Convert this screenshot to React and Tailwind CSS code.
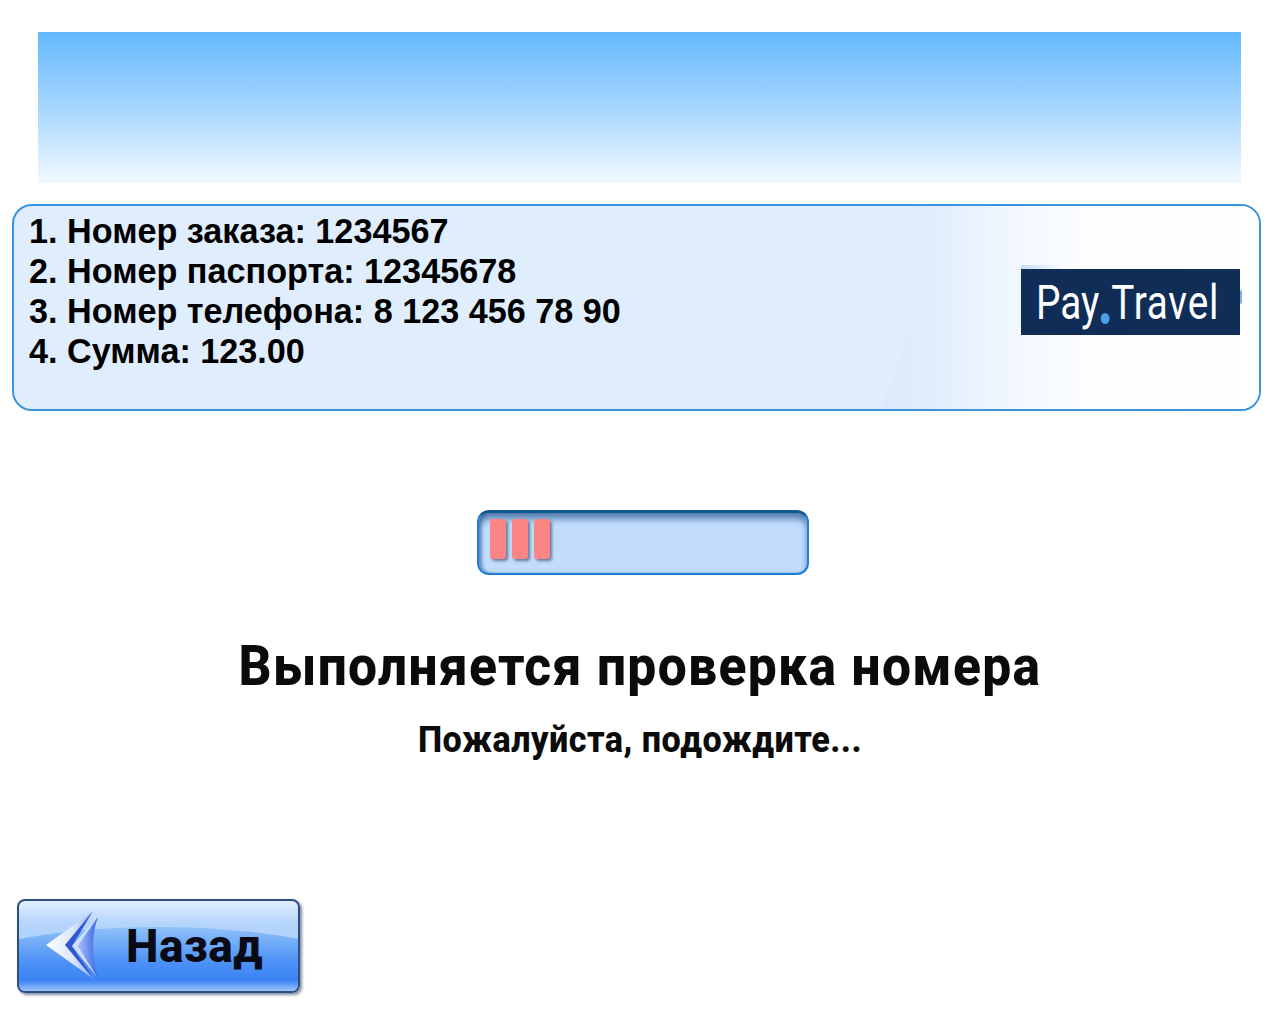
import React from "react";

const infoRows = [
  "1. Номер заказа: 1234567",
  "2. Номер паспорта: 12345678",
  "3. Номер телефона: 8 123 456 78 90",
  "4. Сумма: 123.00",
];

// Decorative swoosh in the right part of the info panel
function PanelSwoosh() {
  return (
    <svg className="absolute inset-0 h-full w-full" viewBox="0 0 1245 203" preserveAspectRatio="none">
      <defs>
        <linearGradient id="swoosh" x1="0" y1="0" x2="1" y2="0">
          <stop offset="0" stopColor="#dae9fc" />
          <stop offset="0.1" stopColor="#dfecfd" />
          <stop offset="0.2" stopColor="#e6f1fd" />
          <stop offset="0.3" stopColor="#eef5fe" />
          <stop offset="0.4" stopColor="#f5f9ff" />
          <stop offset="0.55" stopColor="#fcfdff" />
          <stop offset="1" stopColor="#ffffff" />
        </linearGradient>
      </defs>
      <path d="M903 0 C 905 70, 895 140, 867 203 L1245 203 L1245 0 Z" fill="url(#swoosh)" />
    </svg>
  );
}

function PayTravelLogo() {
  return (
    <div className="relative flex h-[66px] w-[219px] items-center bg-[#0f2d56] pl-[15px]">
      <div className="absolute -top-1 left-0 h-1 w-[40px] bg-gradient-to-r from-[#c4def8] to-[#f4f9ff]" />
      <div className="flex origin-left scale-x-[0.79] items-baseline font-['Roboto',sans-serif] text-[49px] leading-none whitespace-nowrap text-white">
        <span>Pay</span>
        <span className="mx-[2px] h-[11px] w-[11px] translate-y-[5px] rounded-full bg-[#4a9fe6]" />
        <span className="tracking-[1px]">Travel</span>
      </div>
      <div className="absolute right-[-2px] top-[21px] h-[14px] w-[2px] rounded-r-full bg-[#7fb0e0]" />
    </div>
  );
}

function BackArrow() {
  return (
    <svg width="54" height="72" viewBox="0 0 54 72" className="shrink-0">
      <defs>
        <linearGradient id="arrowLight" x1="0" y1="0" x2="1" y2="0">
          <stop offset="0" stopColor="#ffffff" />
          <stop offset="0.55" stopColor="#dbe6fa" />
          <stop offset="1" stopColor="#8aa8ee" />
        </linearGradient>
        <linearGradient id="arrowBlue" x1="0" y1="0" x2="1" y2="0">
          <stop offset="0" stopColor="#a9c0f7" />
          <stop offset="1" stopColor="#3765e6" />
        </linearGradient>
      </defs>
      <path d="M1 35 L47 2 L22 34 L50 70 Z" fill="url(#arrowLight)" />
      <path d="M48 1 L20 35 L50 71 L27 36 Z" fill="#2f57d4" />
      <path d="M52 7 L27 36 L52 67 L33 36 Z" fill="#d2def8" />
      <path d="M53 7 L33 36 L53 68 C47 50 46 25 53 7 Z" fill="url(#arrowBlue)" />
    </svg>
  );
}

export default function App() {
  return (
    <div className="flex h-[1024px] w-[1280px] flex-col overflow-hidden bg-white pt-8">
      {/* Top banner */}
      <div className="ml-[38px] h-[151px] w-[1203px] shrink-0 bg-gradient-to-b from-[#62b8fe] via-[#a6d6fd] to-[#f2f9ff]" />

      {/* Order info */}
      <div className="relative ml-3 mt-[21px] h-[207px] w-[1249px] shrink-0 overflow-hidden rounded-[20px] border-2 border-[#3a94dc] bg-[#e0edfd]">
        <PanelSwoosh />
        <div className="relative flex items-start justify-between pl-[15px] pr-[19px] pt-[5px]">
          <div className="font-['Liberation_Sans',sans-serif] text-[34.2px] font-bold leading-[40px] text-black">
            {infoRows.map((row) => (
              <div key={row}>{row}</div>
            ))}
          </div>
          <div className="mt-[58px]">
            <PayTravelLogo />
          </div>
        </div>
      </div>

      {/* Progress */}
      <div className="ml-[477px] mt-[99px] flex h-[65px] w-[332px] shrink-0 items-start gap-[6px] rounded-[12px] border-2 border-[#1f7fd6] border-t-[3px] border-t-[#11588f] bg-[#c2dcfc] pl-[11px] pt-[6px] shadow-[inset_0_6px_6px_rgba(20,70,130,0.6),inset_3px_0_3px_rgba(20,70,130,0.35)]">
        {[0, 1, 2].map((i) => (
          <div
            key={i}
            className="h-[40px] w-[16px] rounded-[3px] bg-[#fb8585] shadow-[2px_2px_3px_rgba(40,60,90,0.6)]"
          />
        ))}
      </div>

      {/* Status */}
      <div className="mt-[56px] flex flex-col items-center font-['Roboto',sans-serif] font-extrabold text-[#0b0b0b]">
        <h1 className="w-[1284px] scale-x-[0.92] text-center text-[56px] leading-[70px] tracking-[1.45px] whitespace-nowrap">
          Выполняется проверка номера
        </h1>
        <p className="mt-[17px] w-[1280px] scale-x-[0.95] text-center text-[36px] leading-[44px] tracking-[0.5px] whitespace-nowrap">
          Пожалуйста, подождите...
        </p>
      </div>

      {/* Back button */}
      <button className="relative ml-[17px] mt-[137px] flex h-[94px] w-[283px] shrink-0 items-center overflow-hidden rounded-[8px] border-2 border-[#2c4f80] bg-gradient-to-b from-[#e2effe] via-[#b4d4fb] via-25% to-[#a4cbfb] pl-[26px] shadow-[2px_2px_3px_rgba(30,50,80,0.55)]">
        {/* lower dome of the gloss */}
        <div className="absolute left-[-110px] top-[26px] h-[140px] w-[500px] rounded-[50%] bg-[linear-gradient(180deg,#90c1fa_0%,#4a90f6_26%,#3b83f4_38%,#a9cefb_47%)]" />
        <div className="relative flex items-center">
          <BackArrow />
          <span className="ml-[27px] font-['Roboto',sans-serif] text-[46px] font-extrabold leading-none tracking-[0.5px] text-[#0a0a14]">
            Назад
          </span>
        </div>
      </button>
    </div>
  );
}
